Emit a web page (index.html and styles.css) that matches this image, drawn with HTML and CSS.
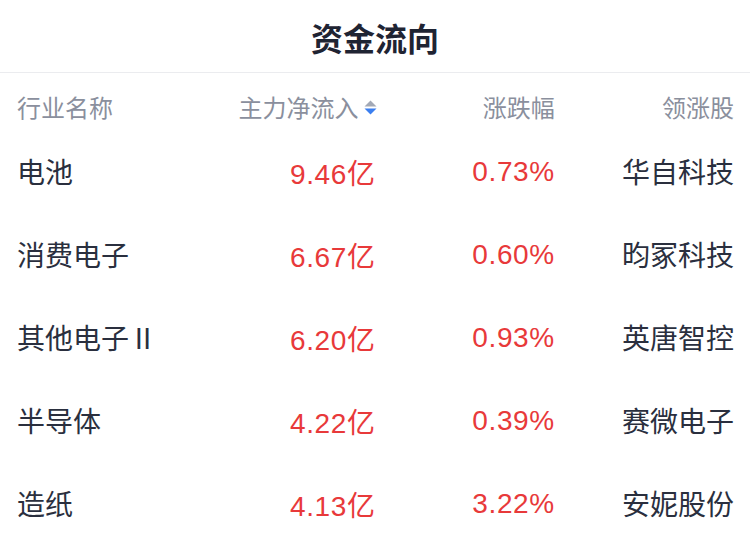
FILE: index.html
```html
<!DOCTYPE html>
<html lang="zh">
<head>
<meta charset="utf-8">
<link rel="stylesheet" href="styles.css">
</head>
<body>
<div class="page">
  <div class="title">资金流向</div>
  <div class="table">
    <div class="row head">
      <div class="c c1">行业名称</div>
      <div class="c c2">主力净流入<span class="sort"><svg width="13" height="17" viewBox="0 0 13 17"><path d="M6.5 1.5 L12.5 7.5 L0.5 7.5 Z" fill="#a3a9b6"/><path d="M0.5 9.5 L12.5 9.5 L6.5 15.5 Z" fill="#3b7ff0"/></svg></span></div>
      <div class="c c3">涨跌幅</div>
      <div class="c c4">领涨股</div>
    </div>
    <div class="row">
      <div class="c c1">电池</div>
      <div class="c c2 num">9.46亿</div>
      <div class="c c3 num">0.73%</div>
      <div class="c c4">华自科技</div>
    </div>
    <div class="row">
      <div class="c c1">消费电子</div>
      <div class="c c2 num">6.67亿</div>
      <div class="c c3 num">0.60%</div>
      <div class="c c4">昀冢科技</div>
    </div>
    <div class="row">
      <div class="c c1">其他电子Ⅱ</div>
      <div class="c c2 num">6.20亿</div>
      <div class="c c3 num">0.93%</div>
      <div class="c c4">英唐智控</div>
    </div>
    <div class="row">
      <div class="c c1">半导体</div>
      <div class="c c2 num">4.22亿</div>
      <div class="c c3 num">0.39%</div>
      <div class="c c4">赛微电子</div>
    </div>
    <div class="row">
      <div class="c c1">造纸</div>
      <div class="c c2 num">4.13亿</div>
      <div class="c c3 num">3.22%</div>
      <div class="c c4">安妮股份</div>
    </div>
  </div>
</div>
</body>
</html>
```

FILE: styles.css
```css
* { box-sizing: border-box; }
html, body { margin: 0; padding: 0; background: #fff; }
body {
  width: 750px;
  height: 548px;
  overflow: hidden;
  font-family: "Noto Sans CJK SC", "Noto Sans", sans-serif;
  color: #2a2f3e;
}
.title {
  height: 73px;
  border-bottom: 1px solid #ebecef;
  display: flex;
  align-items: center;
  justify-content: center;
  font-size: 32px;
  font-weight: 700;
  color: #1f2433;
  padding-top: 1px;
}
.table {
  padding: 0 16px 0 17px;
}
.row {
  display: grid;
  grid-template-columns: repeat(4, 1fr);
  align-items: center;
  height: 83px;
  font-size: 28px;
}
.row.head {
  height: 56.5px;
  padding-top: 20px;
  padding-bottom: 8.5px;
  font-size: 24px;
  color: #8a8f9d;
  line-height: 28px;
}
.c1 { text-align: left; }
.c2, .c3, .c4 { text-align: right; }
.c2 { display: flex; justify-content: flex-end; align-items: center; }
.row .c2.num { display: block; }
.num {
  color: #e8393a;
  font-family: "Liberation Sans", "Noto Sans CJK SC", sans-serif;
  letter-spacing: 0.6px;
  padding-top: 2px;
}
.sort { display: inline-flex; margin-left: 5px; margin-right: -1px; }
```
